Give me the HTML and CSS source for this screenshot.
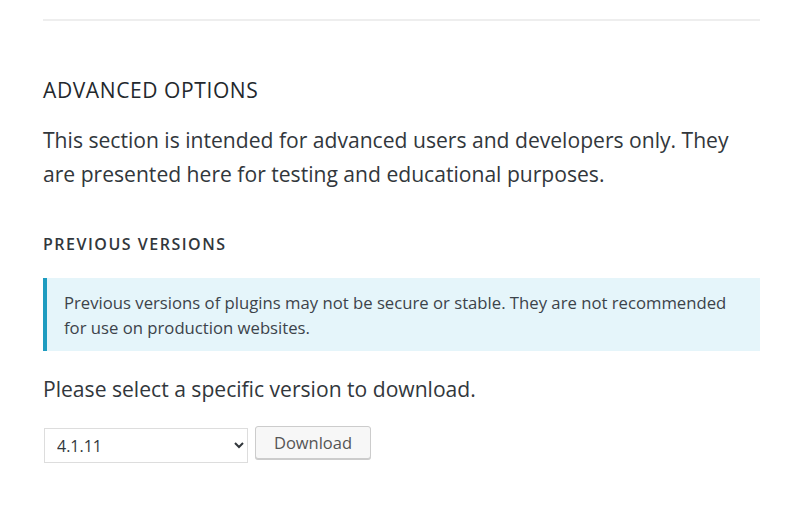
FILE: index.html
```html
<!DOCTYPE html>
<html>
<head>
<meta charset="utf-8">
<link rel="stylesheet" href="styles.css">
</head>
<body>
<div class="page">
  <hr class="divider">
  <h2 class="section-title">ADVANCED OPTIONS</h2>
  <p class="intro">This section is intended for advanced users and developers only. They are presented here for testing and educational purposes.</p>
  <h3 class="sub-title">PREVIOUS VERSIONS</h3>
  <div class="notice">
    <p>Previous versions of plugins may not be secure or stable. They are not recommended for use on production websites.</p>
  </div>
  <p class="select-label">Please select a specific version to download.</p>
  <div class="controls">
    <select class="version-select">
      <option>4.1.11</option>
    </select>
    <button class="download-btn">Download</button>
  </div>
</div>
</body>
</html>
```
FILE: styles.css
```css
html, body {
  margin: 0;
  padding: 0;
  background: #fff;
}
body {
  font-family: "Open Sans", "Noto Sans", sans-serif;
  color: #32373c;
}
.page {
  width: 717px;
  margin-left: 43px;
  padding-top: 19px;
}
.divider {
  border: 0;
  border-top: 2px solid #eeeeee;
  margin: 0;
}
.section-title {
  font-size: 21px;
  font-weight: 400;
  letter-spacing: 0.6px;
  margin: 55px 0 0 0;
  line-height: 28px;
  color: #23282d;
}
.intro {
  font-size: 21.1px;
  line-height: 34px;
  margin: 19px 0 0 0;
  color: #32373c;
}
.sub-title {
  font-size: 16px;
  font-weight: 600;
  letter-spacing: 1.5px;
  margin: 43px 0 0 0;
  line-height: 20px;
  color: #32373c;
}
.notice {
  margin-top: 24px;
  background: #e5f5fa;
  border-left: 4px solid #1e9cc0;
  padding: 12px 20px 11px 17px;
}
.notice p {
  margin: 0;
  font-size: 16.7px;
  line-height: 25px;
  color: #3c434a;
}
.select-label {
  font-size: 21.1px;
  line-height: 30px;
  margin: 23px 0 0 0;
}
.controls {
  display: flex;
  align-items: flex-start;
  gap: 7px;
  margin-top: 22px;
}
.version-select {
  width: 204px;
  height: 35px;
  margin: 2px 0 0 1px;
  font-family: "Open Sans", sans-serif;
  font-size: 16px;
  color: #32373c;
  border: 1px solid #dddddd;
  border-radius: 0;
  background: #fff;
  padding: 0 8px;
}
.download-btn {
  width: 116px;
  height: 33px;
  font-family: "Open Sans", sans-serif;
  font-size: 16.5px;
  color: #555555;
  background: #f7f7f7;
  border: 1px solid #cccccc;
  border-radius: 3px;
  box-shadow: 0 1px 0 #cccccc;
  padding: 0;
}
```
